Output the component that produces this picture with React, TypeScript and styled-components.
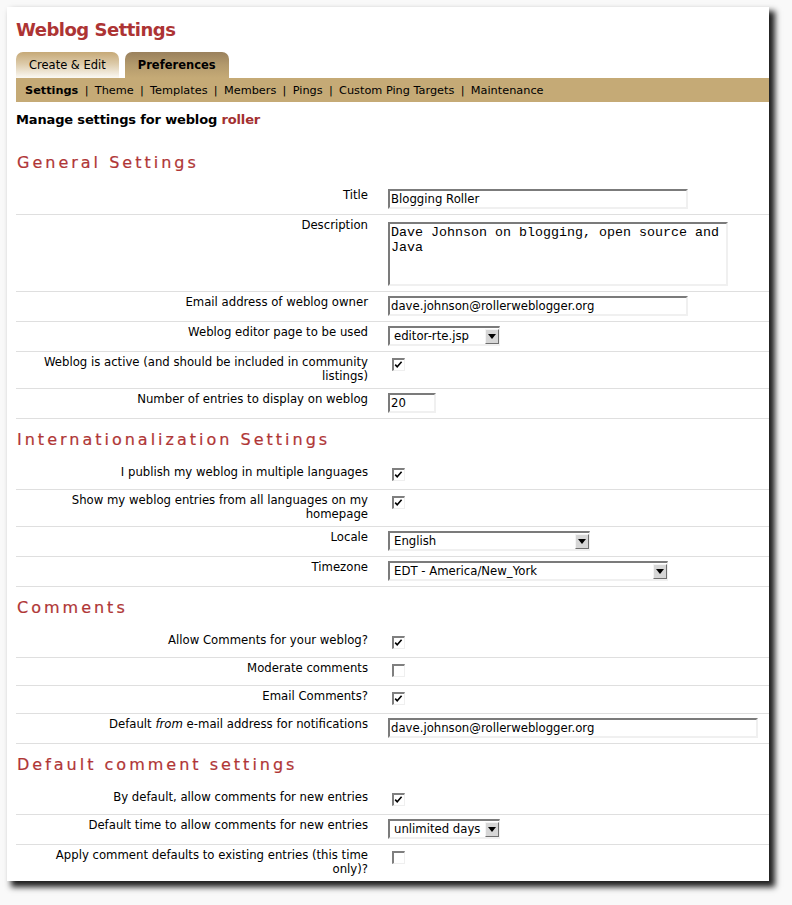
import React from "react";
import styled, { createGlobalStyle } from "styled-components";

const GlobalStyle = createGlobalStyle`
  html, body { margin: 0; padding: 0; }
  body {
    background: #f9f9f9;
    font-family: "DejaVu Sans", "Liberation Sans", sans-serif;
    color: #000;
  }
`;

const Page = styled.div`
  padding: 7px 0 30px 7px;
`;

const Panel = styled.div`
  width: 762px;
  box-sizing: border-box;
  display: flex;
  flex-direction: column;
  background: #fff;
  padding: 11px 0 0 9px;
  box-shadow: 5px 5px 6px 1px rgba(0, 0, 0, 0.88);
`;

const Title = styled.h1`
  margin: 0;
  font-size: 18px;
  line-height: 24px;
  letter-spacing: -0.5px;
  font-weight: bold;
  color: #ad3434;
`;

const TabBar = styled.div`
  display: flex;
  gap: 6px;
  margin-top: 10px;
  height: 26px;
`;

const Tab = styled.div<{ $active?: boolean }>`
  box-sizing: border-box;
  height: 26px;
  padding: 0 13px;
  border-radius: 7px 7px 0 0;
  font-size: 11.5px;
  line-height: 27px;
  font-weight: ${(p) => (p.$active ? "bold" : "normal")};
  background: ${(p) =>
    p.$active
      ? "linear-gradient(to bottom, #9a815d 0%, #b39a6c 50%, #c5aa76 100%)"
      : "linear-gradient(to bottom, #c6a977 0%, #dccaa9 45%, #fbf9f4 100%)"};
`;

const SubNav = styled.div`
  display: flex;
  align-items: center;
  background: #c5aa76;
  height: 24px;
  padding-left: 9px;
  font-size: 11.3px;
  white-space: pre;
`;

const NavItem = styled.span<{ $current?: boolean }>`
  font-weight: ${(p) => (p.$current ? "bold" : "normal")};
`;

const Separator = styled.span`
  margin: 0 6.3px;
`;

const Intro = styled.div`
  margin: 9px 0 13px;
  font-size: 13px;
  line-height: 18px;
  letter-spacing: -0.15px;
  font-weight: bold;
`;

const WeblogName = styled.span`
  color: #a33030;
`;

const SectionHeading = styled.h2`
  margin: 11px 0 12px 1px;
  font-size: 16px;
  line-height: 20px;
  font-weight: normal;
  letter-spacing: 3px;
  color: #b03636;
  -webkit-text-stroke: 0.2px #b03636;
`;

const Row = styled.div<{ $last?: boolean }>`
  display: grid;
  grid-template-columns: 362px 1fr;
  border-bottom: ${(p) => (p.$last ? "none" : "1px solid #dfdfdf")};
`;

const LabelCell = styled.div`
  padding: 3px 10px 5px 10px;
  text-align: right;
  font-size: 11.7px;
  line-height: 14px;
`;

const FieldCell = styled.div`
  padding: 3px 10px 5px 10px;
  display: flex;
  align-items: flex-start;
`;

const TextInput = styled.input<{ $width: number }>`
  box-sizing: border-box;
  width: ${(p) => p.$width}px;
  height: 20px;
  margin: 1px 0 0 0;
  padding: 0 1px;
  border-style: solid;
  border-width: 2px;
  border-color: #7b7b7b #f0f0f0 #f0f0f0 #7b7b7b;
  font-family: "DejaVu Sans", sans-serif;
  font-size: 11.7px;
  color: #000;
  background: #fff;
  outline: none;
`;

const TextArea = styled.textarea`
  box-sizing: border-box;
  width: 340px;
  height: 64px;
  margin: 4px 0 0 0;
  padding: 1px 1px;
  border-style: solid;
  border-width: 2px;
  border-color: #7b7b7b #f0f0f0 #f0f0f0 #7b7b7b;
  font-family: "Liberation Mono", "Courier New", monospace;
  font-size: 13.33px;
  line-height: 15px;
  resize: none;
  outline: none;
  color: #000;
  overflow: hidden;
`;

const SelectBox = styled.div<{ $width: number }>`
  box-sizing: border-box;
  width: ${(p) => p.$width}px;
  height: 20px;
  margin-top: 1px;
  display: flex;
  align-items: center;
  justify-content: space-between;
  border-style: solid;
  border-width: 2px 1px 2px 2px;
  border-color: #7b7b7b #f0f0f0 #f0f0f0 #7b7b7b;
  background: #fff;
  font-size: 11.7px;
  padding: 0 0 0 4px;
`;

const SelectText = styled.span`
  line-height: 16px;
`;

const ArrowButton = styled.span`
  box-sizing: border-box;
  width: 14px;
  height: 15px;
  display: flex;
  align-items: center;
  justify-content: center;
  background: #d6d6d6;
  border-style: solid;
  border-width: 1px;
  border-color: #f4f4f4 #6f6f6f #6f6f6f #f4f4f4;
`;

const CheckBox = styled.span`
  box-sizing: border-box;
  display: inline-block;
  width: 13px;
  height: 13px;
  margin: 3px 3px 3px 4px;
  border-style: solid;
  border-width: 2px 1px 1px 2px;
  border-color: #7f7f7f #efefef #efefef #7f7f7f;
  background: #fff;
`;

const Italic = styled.em`
  font-style: italic;
`;

function Check({ checked }: { checked?: boolean }) {
  return (
    <CheckBox>
      {checked && (
        <svg width="9" height="9" viewBox="0 0 9 9" style={{ display: "block" }}>
          <path d="M1.2 4.6 L3.2 6.8 L7.6 1.8" fill="none" stroke="#000" strokeWidth="1.6" />
        </svg>
      )}
    </CheckBox>
  );
}

function Select({ value, width }: { value: string; width: number }) {
  return (
    <SelectBox $width={width}>
      <SelectText>{value}</SelectText>
      <ArrowButton>
        <svg width="8" height="5" viewBox="0 0 8 5">
          <path d="M0 0 L8 0 L4 5 Z" fill="#000" />
        </svg>
      </ArrowButton>
    </SelectBox>
  );
}

type Field =
  | { kind: "text"; value: string; width: number }
  | { kind: "area"; value: string }
  | { kind: "select"; value: string; width: number }
  | { kind: "check"; checked: boolean };

function FormRow({ label, field, last }: { label: React.ReactNode; field: Field; last?: boolean }) {
  let control: React.ReactNode = null;
  if (field.kind === "text") control = <TextInput readOnly $width={field.width} value={field.value} />;
  else if (field.kind === "area") control = <TextArea readOnly value={field.value} />;
  else if (field.kind === "select") control = <Select value={field.value} width={field.width} />;
  else control = <Check checked={field.checked} />;
  return (
    <Row $last={last}>
      <LabelCell>{label}</LabelCell>
      <FieldCell>{control}</FieldCell>
    </Row>
  );
}

const navItems = ["Settings", "Theme", "Templates", "Members", "Pings", "Custom Ping Targets", "Maintenance"];

export default function App() {
  return (
    <>
      <GlobalStyle />
      <Page>
        <Panel>
          <Title>Weblog Settings</Title>
          <TabBar>
            <Tab>Create &amp; Edit</Tab>
            <Tab $active>Preferences</Tab>
          </TabBar>
          <SubNav>
            {navItems.map((n, i) => (
              <React.Fragment key={n}>
                {i > 0 && <Separator>|</Separator>}
                <NavItem $current={i === 0}>{n}</NavItem>
              </React.Fragment>
            ))}
          </SubNav>
          <Intro>
            Manage settings for weblog <WeblogName>roller</WeblogName>
          </Intro>

          <SectionHeading>General Settings</SectionHeading>
          <FormRow label="Title" field={{ kind: "text", value: "Blogging Roller", width: 300 }} />
          <FormRow label="Description" field={{ kind: "area", value: "Dave Johnson on blogging, open source and Java" }} />
          <FormRow
            label="Email address of weblog owner"
            field={{ kind: "text", value: "dave.johnson@rollerweblogger.org", width: 300 }}
          />
          <FormRow label="Weblog editor page to be used" field={{ kind: "select", value: "editor-rte.jsp", width: 112 }} />
          <FormRow
            label="Weblog is active (and should be included in community listings)"
            field={{ kind: "check", checked: true }}
          />
          <FormRow label="Number of entries to display on weblog" field={{ kind: "text", value: "20", width: 48 }} />

          <SectionHeading>Internationalization Settings</SectionHeading>
          <FormRow label="I publish my weblog in multiple languages" field={{ kind: "check", checked: true }} />
          <FormRow
            label="Show my weblog entries from all languages on my homepage"
            field={{ kind: "check", checked: true }}
          />
          <FormRow label="Locale" field={{ kind: "select", value: "English", width: 202 }} />
          <FormRow label="Timezone" field={{ kind: "select", value: "EDT - America/New_York", width: 280 }} />

          <SectionHeading>Comments</SectionHeading>
          <FormRow label="Allow Comments for your weblog?" field={{ kind: "check", checked: true }} />
          <FormRow label="Moderate comments" field={{ kind: "check", checked: false }} />
          <FormRow label="Email Comments?" field={{ kind: "check", checked: true }} />
          <FormRow
            label={
              <>
                Default <Italic>from</Italic> e-mail address for notifications
              </>
            }
            field={{ kind: "text", value: "dave.johnson@rollerweblogger.org", width: 370 }}
          />

          <SectionHeading>Default comment settings</SectionHeading>
          <FormRow label="By default, allow comments for new entries" field={{ kind: "check", checked: true }} />
          <FormRow
            label="Default time to allow comments for new entries"
            field={{ kind: "select", value: "unlimited days", width: 112 }}
          />
          <FormRow
            label="Apply comment defaults to existing entries (this time only)?"
            field={{ kind: "check", checked: false }}
            last
          />
        </Panel>
      </Page>
    </>
  );
}
